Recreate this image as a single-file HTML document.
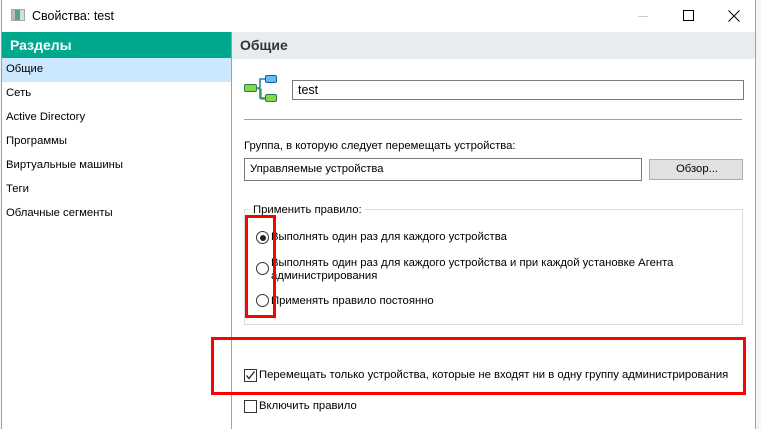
<!DOCTYPE html>
<html><head><meta charset="utf-8"><style>
*{margin:0;padding:0;box-sizing:border-box}
body{width:761px;height:429px;overflow:hidden;background:#fff;font-family:"Segoe UI","Liberation Sans","DejaVu Sans",sans-serif;font-size:11.3px;color:#000;position:relative}
.a{position:absolute}
.t{white-space:nowrap}
</style></head><body>
<div class="a" style="left:0;top:0;width:761px;height:429px;background:#f3f5f7"></div>
<div class="a" style="left:1px;top:0;width:755px;height:429px;background:#fff;border-left:1px solid #a0a0a0;border-right:1px solid #a0a0a0"></div>
<!-- title -->
<div class="a" style="left:11px;top:9px;width:14px;height:12px;background:linear-gradient(90deg,#b7bcc2 0 3px,#5d9f8a 3px 8px,#d9dde1 8px);border:1px solid #9aa"></div>
<div class="a t" style="left:32px;top:9px;font-size:12.5px">Свойства: test</div>
<div class="a" style="left:638px;top:16px;width:10px;height:1px;background:#ccc"></div>
<div class="a" style="left:683px;top:10px;width:11px;height:11px;border:1px solid #000"></div>
<svg class="a" style="left:728px;top:10px" width="12" height="12"><path d="M0.5 0.5L11.5 11.5M11.5 0.5L0.5 11.5" stroke="#000" stroke-width="1"/></svg>
<!-- sidebar -->
<div class="a" style="left:2px;top:32px;width:229px;height:26px;background:#00a88e"></div>
<div class="a t" style="left:10px;top:37px;font-size:14px;font-weight:bold;color:#fff">Разделы</div>
<div class="a" style="left:231px;top:32px;width:1px;height:397px;background:#a0a0a0"></div>
<div class="a" style="left:2px;top:58px;width:229px;height:24px;background:#cce8ff"></div>
<div class="a t" style="left:6px;top:63px">Общие</div>
<div class="a t" style="left:6px;top:87px">Сеть</div>
<div class="a t" style="left:6px;top:111px">Active Directory</div>
<div class="a t" style="left:6px;top:135px">Программы</div>
<div class="a t" style="left:6px;top:159px">Виртуальные машины</div>
<div class="a t" style="left:6px;top:183px">Теги</div>
<div class="a t" style="left:6px;top:207px">Облачные сегменты</div>
<!-- right header -->
<div class="a" style="left:232px;top:32px;width:523px;height:27px;background:#e8ecef"></div>
<div class="a t" style="left:240px;top:37px;font-size:14px;font-weight:bold;color:#333">Общие</div>
<!-- icon -->
<svg class="a" style="left:243px;top:73px" width="36" height="31">
<path d="M14 15H17V6H22M17 15V25H22" stroke="#1f7ab8" stroke-width="1.5" fill="none"/>
<path d="M15 16H18V26H22" stroke="#3aa82a" stroke-width="1.3" fill="none"/>
<rect x="1.5" y="11.5" width="12" height="7" rx="1.5" fill="#86d94a" stroke="#2b7a4a"/>
<rect x="22.5" y="2.5" width="11" height="7" rx="1.5" fill="#5ec0f5" stroke="#1d5d9a"/>
<rect x="22.5" y="21.5" width="11" height="7" rx="1.5" fill="#86d94a" stroke="#2b7a4a"/>
</svg>
<div class="a" style="left:292px;top:80px;width:452px;height:20px;border:1px solid #7a7a7a"></div>
<div class="a t" style="left:298px;top:83px;font-size:12.5px">test</div>
<div class="a" style="left:244px;top:119px;width:498px;height:1px;background:#a0a0a0"></div>
<div class="a t" style="left:244px;top:140px">Группа, в которую следует перемещать устройства:</div>
<div class="a" style="left:244px;top:158px;width:398px;height:23px;border:1px solid #7a7a7a"></div>
<div class="a t" style="left:250px;top:163px">Управляемые устройства</div>
<div class="a" style="left:649px;top:159px;width:94px;height:21px;border:1px solid #adadad;background:#e1e1e1"></div>
<div class="a t" style="left:676px;top:163px">Обзор...</div>
<!-- group -->
<div class="a" style="left:244px;top:209px;width:499px;height:116px;border:1px solid #dcdcdc"></div>
<div class="a t" style="left:250px;top:204px;background:#fff;padding:0 3px">Применить правило:</div>
<div class="a" style="left:256px;top:231px;width:13px;height:13px;border:1px solid #333;border-radius:50%;background:#fff"></div>
<div class="a" style="left:259.5px;top:234.5px;width:6px;height:6px;border-radius:50%;background:#222"></div>
<div class="a t" style="left:271px;top:231px">Выполнять один раз для каждого устройства</div>
<div class="a" style="left:256px;top:262px;width:13px;height:13px;border:1px solid #333;border-radius:50%;background:#fff"></div>
<div class="a t" style="left:271px;top:257px;line-height:13px">Выполнять один раз для каждого устройства и при каждой установке Агента<br>администрирования</div>
<div class="a" style="left:256px;top:294px;width:13px;height:13px;border:1px solid #333;border-radius:50%;background:#fff"></div>
<div class="a t" style="left:271px;top:295px">Применять правило постоянно</div>
<div class="a" style="left:245px;top:215px;width:31px;height:103px;border:3px solid #f00"></div>
<!-- checkboxes -->
<div class="a" style="left:244px;top:369px;width:13px;height:13px;border:1px solid #333;background:#fff"></div>
<svg class="a" style="left:245px;top:370px" width="11" height="11"><path d="M1.5 5.5L4 8.5L9.5 1.5" stroke="#222" stroke-width="1.3" fill="none"/></svg>
<div class="a t" style="left:259px;top:369px">Перемещать только устройства, которые не входят ни в одну группу администрирования</div>
<div class="a" style="left:211px;top:337px;width:535px;height:58px;border:3px solid #f00"></div>
<div class="a" style="left:244px;top:400px;width:13px;height:13px;border:1px solid #333;background:#fff"></div>
<div class="a t" style="left:259px;top:400px">Включить правило</div>
</body></html>
